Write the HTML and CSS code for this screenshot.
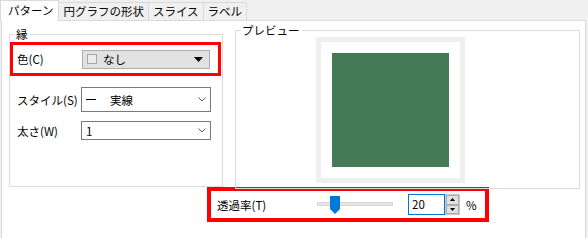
FILE: index.html
```html
<!DOCTYPE html>
<html lang="ja">
<head>
    <meta charset="UTF-8">
    <title>パターン</title>
    <link rel="stylesheet" href="styles.css">
</head>
<body>
    <div class="tabs">
        <div class="tab active">パターン</div>
        <div class="tab">円グラフの形状</div>
        <div class="tab">スライス</div>
        <div class="tab">ラベル</div>
    </div>

    <div class="panel">
        <div class="groups">
            <!-- 縁 -->
            <fieldset class="group edge-group">
                <legend>縁</legend>
                <div class="field mark">
                    <label>色(C)</label>
                    <div class="combo flat">
                        <span class="swatch"></span>
                        <span class="combo-text">なし</span>
                        <svg class="drop" width="9" height="5" viewBox="0 0 9 5"><polygon points="0,0 9,0 4.5,5" fill="#000"/></svg>
                    </div>
                </div>
                <div class="field">
                    <label>スタイル(S)</label>
                    <div class="combo tall">
                        <span class="line-sample"></span>
                        <span class="combo-text">実線</span>
                        <svg class="chevron" width="8" height="5" viewBox="0 0 8 5"><polyline points="0.5,0.5 4,4 7.5,0.5" fill="none" stroke="#606060"/></svg>
                    </div>
                </div>
                <div class="field">
                    <label>太さ(W)</label>
                    <div class="combo">
                        <span class="combo-text">1</span>
                        <svg class="chevron" width="8" height="5" viewBox="0 0 8 5"><polyline points="0.5,0.5 4,4 7.5,0.5" fill="none" stroke="#606060"/></svg>
                    </div>
                </div>
            </fieldset>

            <!-- プレビュー -->
            <fieldset class="group preview-group">
                <legend>プレビュー</legend>
                <div class="preview-frame">
                    <div class="preview-fill"></div>
                </div>
            </fieldset>
        </div>

        <!-- 透過率 -->
        <div class="opacity-row mark">
            <label>透過率(T)</label>
            <div class="slider">
                <div class="track"></div>
                <svg class="thumb" width="10" height="18" viewBox="0 0 10 18"><polygon points="0,0 10,0 10,13 5,18 0,13" fill="#0078d7"/></svg>
            </div>
            <div class="spin">
                <div class="spin-input">20</div>
                <div class="spin-buttons">
                    <div class="spin-btn"><svg width="5" height="3" viewBox="0 0 5 3"><polygon points="2.5,0 5,3 0,3" fill="#000"/></svg></div>
                    <div class="spin-btn"><svg width="5" height="3" viewBox="0 0 5 3"><polygon points="0,0 5,0 2.5,3" fill="#000"/></svg></div>
                </div>
            </div>
            <span class="unit">%</span>
        </div>
    </div>
</body>
</html>
```

FILE: styles.css
```css
* {
    box-sizing: border-box;
}

body {
    margin: 0;
    width: 588px;
    height: 238px;
    overflow: hidden;
    background-color: #f0f0f0;
    font-family: "Noto Sans CJK JP", "Noto Sans", sans-serif;
    font-size: 11.5px;
    color: #000;
}

/* タブ */
.tabs {
    display: flex;
    height: 20px;
    position: relative;
    z-index: 1;
}
.tab {
    height: 18px;
    margin-top: 2px;
    margin-left: -1px;
    padding: 0 4px;
    border: 1px solid #d9d9d9;
    border-bottom: none;
    line-height: 16px;
    background-color: #f0f0f0;
}
.tab.active {
    height: 21px;
    margin-top: 0;
    margin-left: 0;
    padding: 0 5px 0 7px;
    line-height: 19px;
    background-color: #fff;
}

/* 下端は画面の外まで続く */
.panel {
    margin-left: 1px;
    width: 585px;
    height: 218px;
    border: 1px solid #d9d9d9;
    border-bottom: none;
    background-color: #fff;
}

.groups {
    display: flex;
    align-items: flex-start;
}

.group {
    margin: 0;
    padding: 0;
    min-width: 0;
    border: 1px solid #dcdcdc;
}
.group legend {
    margin-left: 4px;
    padding: 0 2px;
    line-height: 14px;
}

.edge-group {
    margin: 6px 0 0 7px;
    width: 214px;
    height: 160px;
}
.preview-group {
    margin: 2px 0 0 12px;
    width: 345px;
    height: 166px;
}

/* 赤枠 */
.mark {
    border: 3px solid #f00;
}

.field {
    display: flex;
    align-items: center;
    padding-left: 7px;
    margin-top: 9px;
}
.field.mark {
    width: 211px;
    height: 34px;
    margin-top: 1px;
    padding-left: 4px;
}
.field.mark + .field {
    margin-top: 11px;
}
.field label {
    width: 64px;
    white-space: nowrap;
}
.field.mark label {
    width: 65px;
}

.combo {
    display: flex;
    align-items: center;
    width: 130px;
    height: 19px;
    padding-left: 4px;
    border: 1px solid #7a7a7a;
    background-color: #fff;
}
.combo.flat {
    width: 128px;
    border-color: #adadad;
    background-color: #e1e1e1;
}
.combo.tall {
    height: 25px;
}
.combo-text {
    flex: 1;
    line-height: 14px;
}
.swatch {
    width: 10px;
    height: 10px;
    margin-right: 6px;
    border: 1px solid #a8a8a8;
    background-color: #ececec;
}
.line-sample {
    width: 10px;
    height: 1px;
    margin-right: 14px;
    background-color: #000;
}
.drop {
    margin-right: 6px;
}
.chevron {
    margin-right: 4px;
}

.preview-frame {
    margin-left: 80px;
    width: 149px;
    height: 146px;
    padding: 11px;
    border: 5px solid #efefef;
}
.preview-fill {
    width: 117px;
    height: 114px;
    background-color: #447a56;
}

/* 透過率 */
.opacity-row {
    display: flex;
    align-items: center;
    margin: -2px 0 0 205px;
    width: 282px;
    height: 35px;
    padding-left: 6px;
    border-width: 4px;
}
.opacity-row label {
    width: 100px;
}
.slider {
    position: relative;
    width: 76px;
    height: 18px;
}
.track {
    position: absolute;
    left: 0;
    right: 0;
    top: 6px;
    height: 4px;
    border: 1px solid #d6d6d6;
    background-color: #e7e7e7;
}
.thumb {
    position: absolute;
    left: 13px;
    top: 0;
}

.spin {
    display: flex;
    margin-left: 15px;
}
.spin-input {
    width: 37px;
    height: 21px;
    padding-left: 3px;
    border: 1px solid #0078d7;
    line-height: 19px;
}
.spin-buttons {
    display: flex;
    flex-direction: column;
    width: 15px;
    height: 21px;
    border: 1px solid #c8c8c8;
    background-color: #fff;
}
.spin-btn {
    flex: 1;
    display: flex;
    align-items: center;
    justify-content: center;
    border: 1px solid #adadad;
    background-color: #e1e1e1;
}
.unit {
    margin-left: 6px;
}
```
